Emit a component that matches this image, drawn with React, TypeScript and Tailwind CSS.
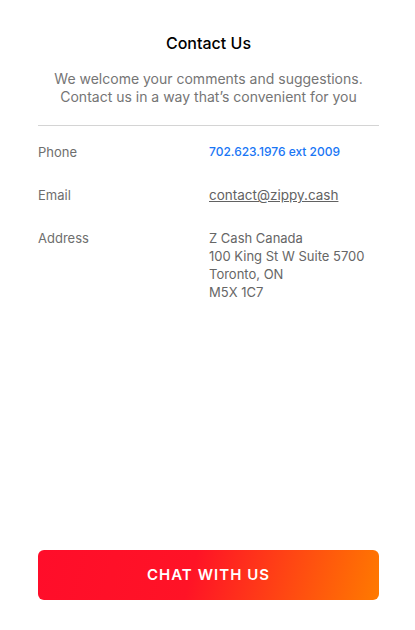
export default function App() {
  return (
    <div
      className="flex flex-col min-h-[630px] bg-white pl-[38px] pr-[36px] pt-[33px] pb-[30px]"
      style={{ fontFamily: "Inter, 'Noto Sans', sans-serif" }}
    >
      <h1 className="text-center text-[16px] leading-[20px] font-medium text-black">Contact Us</h1>
      <p className="mt-[17px] text-center text-[14px] leading-[18px] text-[#757575]">
        We welcome your comments and suggestions.
        <br />
        Contact us in a way that’s convenient for you
      </p>
      <hr className="mt-[19px] border-t border-[#d4d4d4]" />

      <div className="mt-[17px] flex flex-col gap-[25px] text-[13px] leading-[18px] text-[#6e6e6e]">
        <div className="flex">
          <span className="w-[171px]">Phone</span>
          <span className="text-[12px] font-medium text-[#1976f5]">702.623.1976 ext 2009</span>
        </div>
        <div className="flex">
          <span className="w-[171px]">Email</span>
          <span className="text-[13.5px] underline text-[#626262]">contact@zippy.cash</span>
        </div>
        <div className="flex">
          <span className="w-[171px]">Address</span>
          <span className="text-[#666]">
            Z Cash Canada
            <br />
            100 King St W Suite 5700
            <br />
            Toronto, ON
            <br />
            M5X 1C7
          </span>
        </div>
      </div>

      <div className="flex-1" />
      <button className="h-[50px] w-full rounded-[6px] bg-[linear-gradient(105deg,#ff0d2a_0%,#ff1326_45%,#ff7a00_100%)] text-[15px] font-semibold tracking-[0.07em] text-white">
        CHAT WITH US
      </button>
    </div>
  );
}
